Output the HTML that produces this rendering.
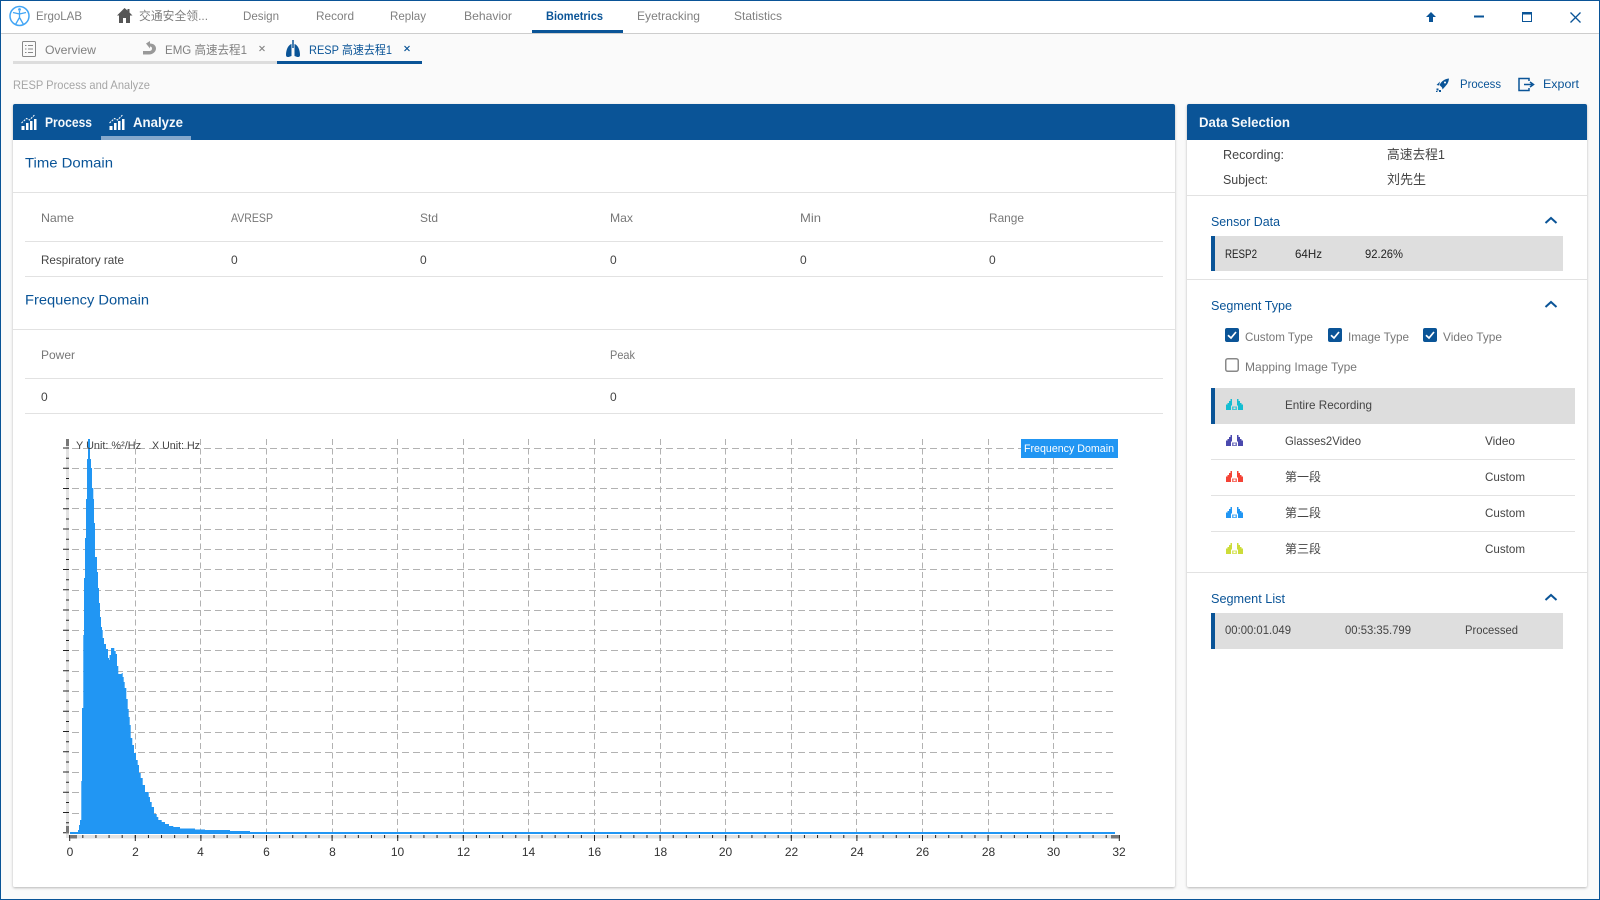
<!DOCTYPE html>
<html lang="en"><head><meta charset="utf-8"><title>ErgoLAB - RESP Process and Analyze</title>
<style>
html,body{margin:0;padding:0;width:1600px;height:900px;overflow:hidden;background:#fafafa}
svg{display:block}
text{font-family:"Liberation Sans","Noto Sans CJK SC",sans-serif;font-size:12px;fill:#333}
.g{fill:#808080}.b{fill:#0a5497}.h{font-size:14px;fill:#0a5497}.s{font-size:13px;fill:#0a5497}
.w{font-size:14px;font-weight:bold;fill:#f4f8fb}.d{fill:#444}.m{fill:#777}.k{fill:#222}
.a{text-anchor:middle;fill:#333}
</style></head><body>
<svg xmlns="http://www.w3.org/2000/svg" width="1600" height="900" viewBox="0 0 1600 900">
<defs>
<filter id="sh" x="-2%" y="-2%" width="104%" height="104%"><feDropShadow dx="0" dy="1" stdDeviation="1.2" flood-color="#000" flood-opacity=".28"/></filter>
<g id="seg"><path d="M0 11V5.500L1.500 5.500V4H3V2H4.500V0H6V6.500H5V11Z M17 11V5.500L15.500 5.500V4H14V2H12.500V0H11V6.500H12V11Z"/><path d="M6 7.500H11V11H6ZM7.500 8.500V10H9.500V8.500Z" fill-rule="evenodd" opacity=".75"/></g>
<g id="chart" fill="#fff"><path d="M0 15h3v-4H0zM4.500 15h2.500V8H4.500zM8.500 15H11V6H8.500zM12.500 15H15V4h-2.500z"/><path d="M0 8L5 3.500 8 5 13 0" fill="none" stroke="#fff" stroke-dasharray="2 1"/></g>
<g id="chk"><rect width="14" height="14" rx="2" fill="#0a5497"/><path d="M3 7.200L6 10 11 4" fill="none" stroke="#fff" stroke-width="1.700"/></g>
<path id="chev" d="M-5.500 3L0-2 5.500 3" fill="none" stroke="#0a5497" stroke-width="2"/>
</defs>

<rect width="1600" height="900" fill="#fafafa"/>

<!-- title bar -->
<rect x="0" y="0" width="1600" height="33" fill="#fff" filter="url(#sh)"/>
<circle cx="19.500" cy="16" r="9.500" fill="none" stroke="#42a5f5" stroke-width="1.500"/>
<path d="M19.500 11v7M13 12.500l6.500 1.500 6.500-1.500M19.500 17.500l-4 7M19.500 17.500l4 7" fill="none" stroke="#42a5f5" stroke-width="1.300"/>
<circle cx="19.500" cy="9.500" r="1.400" fill="#42a5f5"/>
<text x="36" y="20" class="g" textLength="46" lengthAdjust="spacingAndGlyphs">ErgoLAB</text>
<path d="M124.500 8L117 15.500H119V23H123V18H126V23H130V15.500H132.500L129.500 12.500V9H127.500V10.500Z" fill="#555"/>
<text x="139" y="20" class="g" textLength="69" lengthAdjust="spacingAndGlyphs">交通安全领...</text>
<text x="243" y="20" class="g" textLength="36" lengthAdjust="spacingAndGlyphs">Design</text>
<text x="316" y="20" class="g" textLength="38" lengthAdjust="spacingAndGlyphs">Record</text>
<text x="390" y="20" class="g" textLength="36" lengthAdjust="spacingAndGlyphs">Replay</text>
<text x="464" y="20" class="g" textLength="48" lengthAdjust="spacingAndGlyphs">Behavior</text>
<text x="546" y="20" class="b" font-weight="bold" textLength="57" lengthAdjust="spacingAndGlyphs">Biometrics</text>
<text x="637" y="20" class="g" textLength="63" lengthAdjust="spacingAndGlyphs">Eyetracking</text>
<text x="734" y="20" class="g" textLength="48" lengthAdjust="spacingAndGlyphs">Statistics</text>
<rect x="532" y="30" width="91" height="3" fill="#0a5497"/>
<path d="M1431 12l5 5h-3v5h-4v-5h-3z" fill="#0a5497"/>
<rect x="1474" y="15.500" width="10" height="2" fill="#0a5497"/>
<rect x="1522.500" y="12.500" width="9" height="9" fill="none" stroke="#0a5497"/><rect x="1522" y="12" width="10" height="2.500" fill="#0a5497"/>
<path d="M1570.500 12.500l10 10M1580.500 12.500l-10 10" stroke="#0a5497" stroke-width="1.300" fill="none"/>

<!-- tabs -->
<rect x="13" y="61" width="264" height="3" fill="#ddd"/>
<rect x="277" y="61" width="145" height="3" fill="#0a5497"/>
<rect x="22.500" y="41.500" width="13" height="15" rx="1" fill="none" stroke="#888"/>
<path d="M25 45.500h1.500M28 45.500h5M25 49h1.500M28 49h5M25 52.500h1.500M28 52.500h5" stroke="#888" fill="none"/>
<text x="45" y="54" class="g" textLength="51" lengthAdjust="spacingAndGlyphs">Overview</text>
<path d="M146 43.500l4-2.500v2.500c3.500 0 6 2 6 5s-3 6-7 6h-6v-3.500h6c2 0 3-1 3-2.500s-1-2-2-2v2z" fill="#999"/>
<text x="165" y="54" class="g" textLength="82" lengthAdjust="spacingAndGlyphs">EMG 高速去程1</text>
<path d="M259.500 46l5 5M264.500 46l-5 5" stroke="#888" stroke-width="1.200" fill="none"/>
<path d="M293 40v8" stroke="#0a5497" stroke-width="1.500" fill="none"/>
<path d="M291.500 44C288 45 286 50 286 55C286 57.500 288 57.500 291.500 56ZM294.500 44C298 45 300 50 300 55C300 57.500 298 57.500 294.500 56Z" fill="#0a5497"/>
<text x="309" y="54" class="b" textLength="83" lengthAdjust="spacingAndGlyphs">RESP 高速去程1</text>
<path d="M404.500 46l5 5M409.500 46l-5 5" stroke="#0a5497" stroke-width="1.200" fill="none"/>

<!-- subheader -->
<text x="13" y="89" style="fill:#a6a6a6" textLength="137" lengthAdjust="spacingAndGlyphs">RESP Process and Analyze</text>
<path d="M1449 78.500C1444.500 79 1441.500 81 1439.500 85L1442.500 88C1446.500 86 1448.500 83 1449 78.500Z" fill="#0a5497"/>
<path d="M1440 81.500L1436.500 85L1439 85.500ZM1446 85.500L1442.500 89.500L1442 87Z" fill="#0a5497"/>
<path d="M1436.500 88.500h2v2h-2zM1439 90h2v2h-2zM1436 91h1.500v1h-1.500z" fill="#0a5497"/>
<circle cx="1445" cy="82.500" r="1" fill="#fff"/>
<text x="1460" y="88" class="b" textLength="41" lengthAdjust="spacingAndGlyphs">Process</text>
<path d="M1529 81v-2.500h-10v12h10V88" fill="none" stroke="#0a5497" stroke-width="1.500"/>
<path d="M1524 84.500h8M1530 82l3.500 2.500-3.500 2.500" fill="none" stroke="#0a5497" stroke-width="1.500"/>
<text x="1543" y="88" class="b" textLength="36" lengthAdjust="spacingAndGlyphs">Export</text>

<!-- left panel -->
<rect x="13" y="104" width="1162" height="783" rx="2" fill="#fff" filter="url(#sh)"/>
<path d="M13 140V106a2 2 0 0 1 2-2H1173a2 2 0 0 1 2 2V140Z" fill="#0a5497"/>
<use href="#chart" x="21.500" y="115"/>
<text x="45" y="127" class="w" textLength="47" lengthAdjust="spacingAndGlyphs">Process</text>
<use href="#chart" x="109.500" y="115"/>
<text x="133" y="127" class="w" textLength="50" lengthAdjust="spacingAndGlyphs">Analyze</text>
<rect x="101" y="136" width="90" height="4" fill="#85a8cc"/>

<text x="25" y="167.500" class="h" textLength="88" lengthAdjust="spacingAndGlyphs">Time Domain</text>
<path d="M13 192.500H1175M13 329.500H1175M25 241.500H1163M25 276.500H1163M25 378.500H1163M25 413.500H1163" stroke="#e2e2e2" fill="none"/>
<text x="41" y="222" class="m" textLength="33" lengthAdjust="spacingAndGlyphs">Name</text>
<text x="231" y="222" class="m" textLength="42" lengthAdjust="spacingAndGlyphs">AVRESP</text>
<text x="420" y="222" class="m" textLength="18" lengthAdjust="spacingAndGlyphs">Std</text>
<text x="610" y="222" class="m" textLength="23" lengthAdjust="spacingAndGlyphs">Max</text>
<text x="800" y="222" class="m" textLength="21" lengthAdjust="spacingAndGlyphs">Min</text>
<text x="989" y="222" class="m" textLength="35" lengthAdjust="spacingAndGlyphs">Range</text>
<text x="41" y="264" class="d" textLength="83" lengthAdjust="spacingAndGlyphs">Respiratory rate</text>
<text x="231" y="264" class="d">0</text><text x="420" y="264" class="d">0</text><text x="610" y="264" class="d">0</text><text x="800" y="264" class="d">0</text><text x="989" y="264" class="d">0</text>
<text x="25" y="304.500" class="h" textLength="124" lengthAdjust="spacingAndGlyphs">Frequency Domain</text>
<text x="41" y="359" class="m" textLength="34" lengthAdjust="spacingAndGlyphs">Power</text>
<text x="610" y="359" class="m" textLength="25" lengthAdjust="spacingAndGlyphs">Peak</text>
<text x="41" y="401" class="d">0</text><text x="610" y="401" class="d">0</text>

<!-- chart -->
<path d="M72 448.500H1114M72 468.500H1114M72 488.500H1114M72 508.500H1114M72 529.500H1114M72 549.500H1114M72 569.500H1114M72 590.500H1114M72 610.500H1114M72 630.500H1114M72 650.500H1114M72 671.500H1114M72 691.500H1114M72 711.500H1114M72 732.500H1114M72 752.500H1114M72 772.500H1114M72 792.500H1114M72 813.500H1114" stroke="#b2b2b2" stroke-dasharray="7 4" fill="none"/>
<path d="M135.500 439V833M200.500 439V833M266.500 439V833M332.500 439V833M397.500 439V833M463.500 439V833M528.500 439V833M594.500 439V833M660.500 439V833M725.500 439V833M791.500 439V833M856.500 439V833M922.500 439V833M988.500 439V833M1053.500 439V833" stroke="#b2b2b2" stroke-dasharray="6 3.500" fill="none"/>
<rect x="66" y="439" width="3" height="399" fill="#e2e2e2"/>
<rect x="69" y="835" width="1050" height="3.500" fill="#e2e2e2"/>
<path d="M88 439H90V459H91V468H92V488H93.300V499H94V523H95V557H97V572H98V588H99V603H100V617H101V627H102V630H102.700V638H104V644H106V649H108V658H109V660H109.500V655H111V648H112.700V648H114.300V651H115.700V654H117V666H118.300V674H121.700V673H122.700V677H123.700V682H124.700V688H126.300V699H127.700V709H128.700V717H129.700V725H130.700V738H132.300V745H134V753H136V760H137.700V765H139V773H140.700V778H142.700V785H145V792H148.700V797H150V802H151.700V807H154V814H156.700V817H158.300V820H161.700V822H165V824H169V826H173.300V827H180V828.500H195V829.500H205V830H230V831H250V832H1115V834H70V832H78V830H79V825H80V820H81.300V781H82V708H83.300V635H84V578H85V538H86V499H87V459H88Z" fill="#2196f3"/>
<line x1="66" y1="833.300" x2="66" y2="440" stroke="#222" stroke-width="6" stroke-dasharray="1 19.250"/>
<line x1="67.500" y1="823.200" x2="67.500" y2="440" stroke="#222" stroke-width="3" stroke-dasharray="1 19.250"/>
<line x1="69.200" y1="838" x2="1120" y2="838" stroke="#222" stroke-width="6" stroke-dasharray="1 64.600"/>
<line x1="69.200" y1="836.500" x2="1120" y2="836.500" stroke="#222" stroke-width="3" stroke-dasharray="1 12.120"/>
<rect x="66" y="439" width="3" height="7" fill="#777"/><rect x="66" y="826" width="3" height="7" fill="#777"/>
<rect x="70" y="835" width="7" height="3.500" fill="#777"/><rect x="1111" y="835" width="8" height="3.500" fill="#777"/>
<text x="76" y="449" style="font-size:11px" class="d" textLength="65" lengthAdjust="spacingAndGlyphs">Y Unit: %²/Hz</text>
<text x="152" y="449" style="font-size:11px" class="d" textLength="48" lengthAdjust="spacingAndGlyphs">X Unit: Hz</text>
<rect x="1021" y="439" width="97" height="19" fill="#2196f3"/>
<text x="1024" y="452" style="font-size:11px;fill:#fff" textLength="90" lengthAdjust="spacingAndGlyphs">Frequency Domain</text>
<text x="70" y="856" class="a">0</text><text x="135.500" y="856" class="a">2</text><text x="200.500" y="856" class="a">4</text><text x="266.500" y="856" class="a">6</text><text x="332.500" y="856" class="a">8</text><text x="397.500" y="856" class="a">10</text><text x="463.500" y="856" class="a">12</text><text x="528.500" y="856" class="a">14</text><text x="594.500" y="856" class="a">16</text><text x="660.500" y="856" class="a">18</text><text x="725.500" y="856" class="a">20</text><text x="791.500" y="856" class="a">22</text><text x="857" y="856" class="a">24</text><text x="922.500" y="856" class="a">26</text><text x="988.500" y="856" class="a">28</text><text x="1053.500" y="856" class="a">30</text><text x="1119" y="856" class="a">32</text>

<!-- right panel -->
<rect x="1187" y="104" width="400" height="783" rx="2" fill="#fff" filter="url(#sh)"/>
<path d="M1187 140V106a2 2 0 0 1 2-2H1585a2 2 0 0 1 2 2V140Z" fill="#0a5497"/>
<text x="1199" y="127" class="w" textLength="91" lengthAdjust="spacingAndGlyphs">Data Selection</text>
<text x="1223" y="159" style="font-size:13px" class="d" textLength="61" lengthAdjust="spacingAndGlyphs">Recording:</text>
<text x="1387" y="159" style="font-size:13px" class="d" textLength="58" lengthAdjust="spacingAndGlyphs">高速去程1</text>
<text x="1223" y="184" style="font-size:13px" class="d" textLength="45" lengthAdjust="spacingAndGlyphs">Subject:</text>
<text x="1387" y="184" style="font-size:13px" class="d">刘先生</text>
<path d="M1187 195.500H1587M1187 279.500H1587M1187 572.500H1587M1211 459.500H1575M1211 495.500H1575M1211 531.500H1575" stroke="#e2e2e2" fill="none"/>

<text x="1211" y="226" class="s" textLength="69" lengthAdjust="spacingAndGlyphs">Sensor Data</text>
<use href="#chev" x="1551" y="220"/>
<rect x="1211" y="236" width="352" height="35" fill="#dedede"/><rect x="1211" y="236" width="4" height="35" fill="#0a5497"/>
<text x="1225" y="258" class="k" textLength="32" lengthAdjust="spacingAndGlyphs">RESP2</text>
<text x="1295" y="258" class="k" textLength="27" lengthAdjust="spacingAndGlyphs">64Hz</text>
<text x="1365" y="258" class="k" textLength="38" lengthAdjust="spacingAndGlyphs">92.26%</text>

<text x="1211" y="310" class="s" textLength="81" lengthAdjust="spacingAndGlyphs">Segment Type</text>
<use href="#chev" x="1551" y="304"/>
<use href="#chk" x="1225" y="328"/>
<text x="1245" y="341" class="m" textLength="68" lengthAdjust="spacingAndGlyphs">Custom Type</text>
<use href="#chk" x="1328" y="328"/>
<text x="1348" y="341" class="m" textLength="61" lengthAdjust="spacingAndGlyphs">Image Type</text>
<use href="#chk" x="1423" y="328"/>
<text x="1443" y="341" class="m" textLength="59" lengthAdjust="spacingAndGlyphs">Video Type</text>
<rect x="1225.750" y="358.750" width="12.500" height="12.500" rx="2" fill="#fff" stroke="#888" stroke-width="1.500"/>
<text x="1245" y="371" class="m" textLength="112" lengthAdjust="spacingAndGlyphs">Mapping Image Type</text>

<rect x="1211" y="388" width="364" height="36" fill="#ddd"/><rect x="1211" y="388" width="4" height="36" fill="#0a5497"/>
<use href="#seg" x="1226" y="399" fill="#14bdd1"/>
<text x="1285" y="409" class="d" textLength="87" lengthAdjust="spacingAndGlyphs">Entire Recording</text>
<use href="#seg" x="1226" y="435" fill="#4a49ae"/>
<text x="1285" y="445" class="d" textLength="76" lengthAdjust="spacingAndGlyphs">Glasses2Video</text>
<text x="1485" y="445" class="d" textLength="30" lengthAdjust="spacingAndGlyphs">Video</text>
<use href="#seg" x="1226" y="471" fill="#f44336"/>
<text x="1285" y="481" class="d" textLength="36" lengthAdjust="spacingAndGlyphs">第一段</text>
<text x="1485" y="481" class="d" textLength="40" lengthAdjust="spacingAndGlyphs">Custom</text>
<use href="#seg" x="1226" y="507" fill="#2196f3"/>
<text x="1285" y="517" class="d" textLength="36" lengthAdjust="spacingAndGlyphs">第二段</text>
<text x="1485" y="517" class="d" textLength="40" lengthAdjust="spacingAndGlyphs">Custom</text>
<use href="#seg" x="1226" y="543" fill="#cddc39"/>
<text x="1285" y="553" class="d" textLength="36" lengthAdjust="spacingAndGlyphs">第三段</text>
<text x="1485" y="553" class="d" textLength="40" lengthAdjust="spacingAndGlyphs">Custom</text>

<text x="1211" y="603" class="s" textLength="74" lengthAdjust="spacingAndGlyphs">Segment List</text>
<use href="#chev" x="1551" y="597"/>
<rect x="1211" y="613" width="352" height="36" fill="#dedede"/><rect x="1211" y="613" width="4" height="36" fill="#0a5497"/>
<text x="1225" y="634" class="d" textLength="66" lengthAdjust="spacingAndGlyphs">00:00:01.049</text>
<text x="1345" y="634" class="d" textLength="66" lengthAdjust="spacingAndGlyphs">00:53:35.799</text>
<text x="1465" y="634" class="d" textLength="53" lengthAdjust="spacingAndGlyphs">Processed</text>

<!-- window frame -->
<rect x=".5" y=".5" width="1599" height="899" fill="none" stroke="#0a5497"/>
</svg>
</body></html>
